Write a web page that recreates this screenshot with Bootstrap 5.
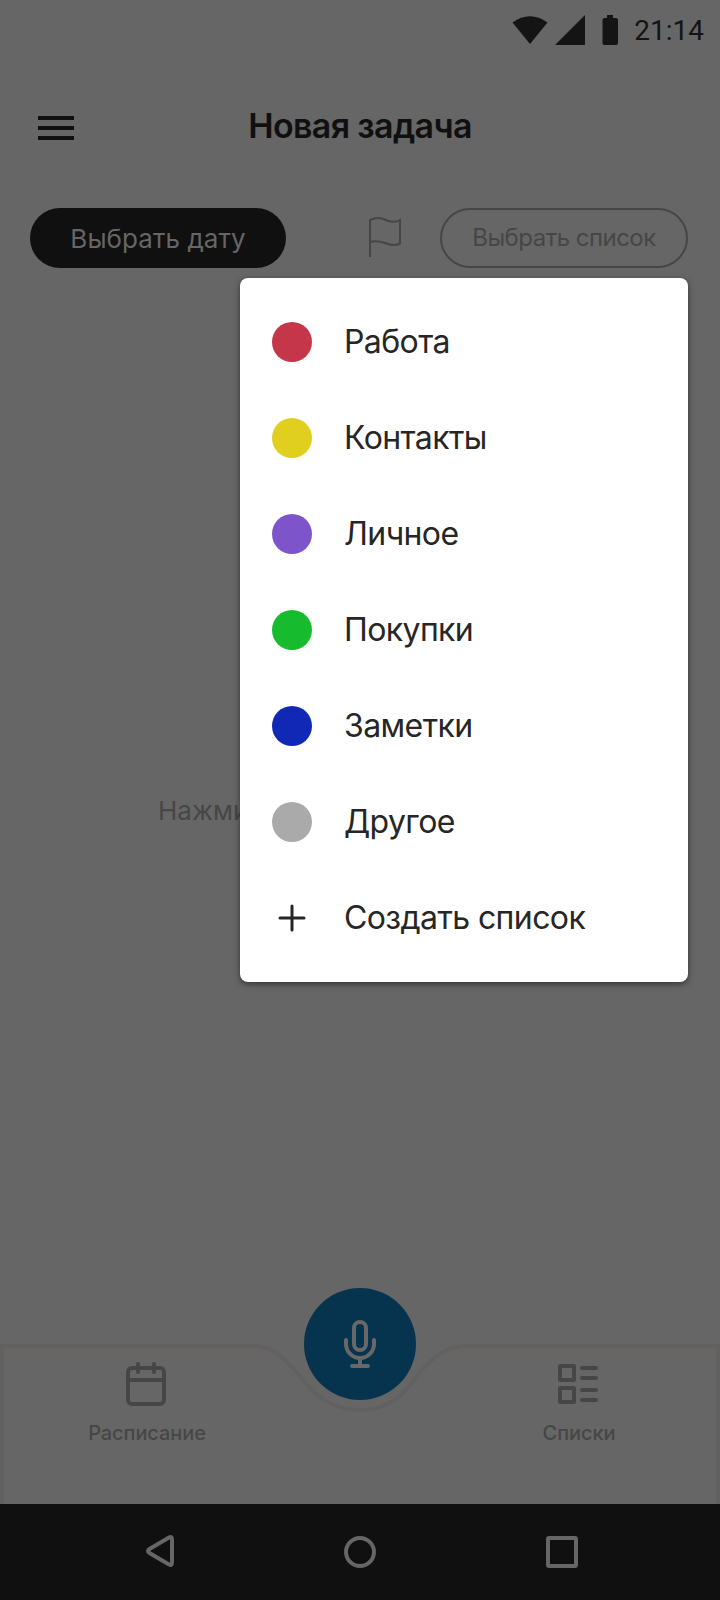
<!DOCTYPE html>
<html lang="ru">
<head>
<meta charset="utf-8">
<meta name="viewport" content="width=device-width, initial-scale=1">
<title>Новая задача</title>
<link href="https://cdn.jsdelivr.net/npm/bootstrap@5.3.0/dist/css/bootstrap.min.css" rel="stylesheet">
<style>
  body { background: #666; color: #101010; font-family: Inter, "Noto Sans", sans-serif; overflow: hidden; }
  svg { display: block; flex: none; }
  .screen { width: 720px; height: 1600px; }
  .status-row { height: 60px; padding-right: 16px; gap: 16px; font: 400 28px/60px Roboto, sans-serif; color: #141414; }
  .status-row span { padding-top: 2px; }
  .title-row { height: 132px; padding: 0 38px; }
  .title-row h1 { font-size: 34px; font-weight: 600; line-height: 40px; letter-spacing: -.65px; margin: 0; }
  .title-row .side { width: 36px; }
  .title-row svg { margin-top: 4px; }
  .controls { height: 92px; padding: 16px 32px 16px 30px; }
  .controls svg { margin-right: 36px; }
  .pill { height: 60px; border-radius: 30px; padding: 0; line-height: 1; display: flex; align-items: center; justify-content: center; }
  .pill-date { width: 256px; background: #101010; color: #666; font-size: 26px; font-weight: 370; letter-spacing: .05px; padding-top: 2px; }
  .pill-list { width: 248px; border: 2px solid #464646; color: #464646; font-size: 24px; font-weight: 370; letter-spacing: -.53px; }
  .hint { color: #464646; font-size: 26px; font-weight: 370; line-height: 40px; padding-left: 158px; padding-top: 507px; }
  .list-menu { left: 240px; top: 278px; width: 448px; padding: 16px 0; border: 0; border-radius: 8px; background: #fff; box-shadow: 0 2px 6px rgba(0,0,0,.5); }
  .list-menu li { height: 96px; padding: 0 32px; gap: 32px; font-size: 32px; font-weight: 370; letter-spacing: -.6px; line-height: 1; color: #262626; }
  .dot { width: 40px; height: 40px; border-radius: 50%; flex: none; }
  .tabs { height: 160px; }
  .tabs .edge { left: 0; top: 0; }
  .tab { width: 292px; padding-top: 18px; gap: 13px; color: #464646; font-size: 20px; font-weight: 450; line-height: 28px; letter-spacing: -.08px; }
  .tab span { padding-left: 2px; }
  .tab-end { width: 284px; }
  .mic { left: 304px; top: -56px; width: 112px; height: 112px; background: #06334d; }
  .sysbar { height: 96px; background: #101010; }
</style>
</head>
<body>
<div class="screen d-flex flex-column position-relative">
  <div class="status-row d-flex justify-content-end align-items-center">
    <svg width="108" height="60" viewBox="0 0 108 60" fill="#141414">
      <path d="M2.500 22.500Q20 10 37.500 22.500L20 44z"/>
      <path d="M45 45L75 15V45z"/>
      <path d="M97 15h6v3h3q2 0 2 2v23q0 2-2 2H94.500q-2 0-2-2V20q0-2 2-2h2.500z"/>
    </svg>
    <span>21:14</span>
  </div>
  <header class="title-row d-flex align-items-center justify-content-between">
    <svg class="side" width="36" height="24" fill="#101010"><path d="M0 0h36v4H0zM0 10h36v4H0zM0 20h36v4H0z"/></svg>
    <h1>Новая задача</h1>
    <span class="side"></span>
  </header>
  <div class="controls d-flex align-items-center">
    <button class="btn pill pill-date">Выбрать дату</button>
    <svg class="ms-auto" width="36" height="44" viewBox="0 0 36 44" fill="none" stroke="#464646" stroke-width="2">
      <path d="M2 41V4C8 1 14 2 18 4S28 6.500 32 4V27.500C27 30 22 29 17 27S7 24.500 2 26"/>
    </svg>
    <button class="btn pill pill-list">Выбрать список</button>
  </div>
  <div class="hint flex-grow-1">Нажми</div>

  <nav class="tabs position-relative d-flex justify-content-between">
    <svg class="edge position-absolute" width="720" height="160" fill="none" stroke="#636160" stroke-width="4">
      <path d="M2 160V2H254C276 2 290 20 302 35S330 66 361 66S406 47 418 31S445 2 466 2H718V160"/>
    </svg>
    <a class="tab d-flex flex-column align-items-center text-decoration-none">
      <svg width="40" height="44" fill="none" stroke="#464646" stroke-width="4" stroke-linecap="round"><rect x="2" y="6" width="36" height="36" rx="4"/><path d="M2 18H38M12 2V10M28 2V10"/></svg>
      <span>Расписание</span>
    </a>
    <button class="mic btn rounded-circle position-absolute d-flex align-items-center justify-content-center p-0 border-0">
      <svg width="32" height="48" fill="none" stroke="#686868" stroke-width="4" stroke-linecap="round"><rect x="10" y="2" width="12" height="28" rx="6"/><path d="M2 20V24A14 14 0 0 0 30 24V20M16 38V46M8 46H24"/></svg>
    </button>
    <a class="tab tab-end d-flex flex-column align-items-center text-decoration-none">
      <svg width="40" height="44" fill="none" stroke="#464646" stroke-width="4" stroke-linecap="round"><rect x="2" y="4" width="14" height="14" rx=".5"/><rect x="2" y="26" width="14" height="14" rx=".5"/><path d="M24 6H38M24 16H38M24 28H38M24 38H38"/></svg>
      <span>Списки</span>
    </a>
  </nav>
  <div class="sysbar">
    <svg width="720" height="96" fill="none" stroke="#666" stroke-width="4" stroke-linejoin="round">
      <path d="M149.500 45L169 33.500Q172 32 172 35.500V58.500Q172 62 169 60.500L149.500 49Q146.500 47 149.500 45z"/>
      <circle cx="360" cy="48" r="14"/>
      <rect x="548" y="34" width="28" height="28" rx="1"/>
    </svg>
  </div>

  <ul class="list-menu list-unstyled position-absolute m-0">
    <li class="d-flex align-items-center"><span class="dot" style="background:#c6364b"></span><span>Работа</span></li>
    <li class="d-flex align-items-center"><span class="dot" style="background:#e1cf20"></span><span>Контакты</span></li>
    <li class="d-flex align-items-center"><span class="dot" style="background:#7e54cb"></span><span>Личное</span></li>
    <li class="d-flex align-items-center"><span class="dot" style="background:#16bc2e"></span><span>Покупки</span></li>
    <li class="d-flex align-items-center"><span class="dot" style="background:#1127b6"></span><span>Заметки</span></li>
    <li class="d-flex align-items-center"><span class="dot" style="background:#aaa"></span><span>Другое</span></li>
    <li class="d-flex align-items-center">
      <svg width="40" height="40" fill="none" stroke="#262626" stroke-width="3" stroke-linecap="round"><path d="M8 20H32M20 8V32"/></svg>
      <span>Создать список</span>
    </li>
  </ul>
</div>
<script src="https://cdn.jsdelivr.net/npm/bootstrap@5.3.0/dist/js/bootstrap.bundle.min.js"></script>
</body>
</html>
